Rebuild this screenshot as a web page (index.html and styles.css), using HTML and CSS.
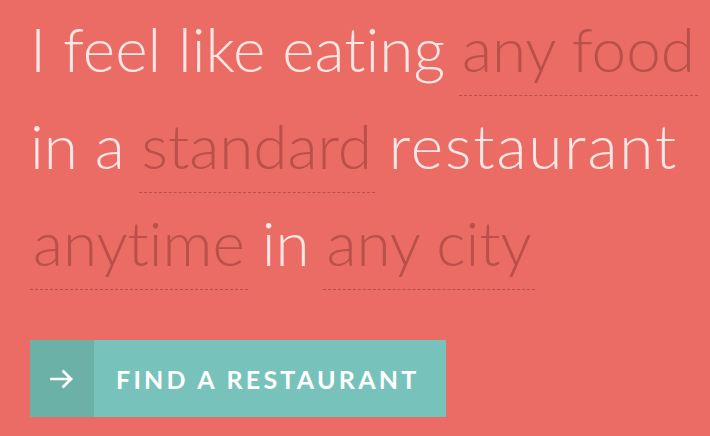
FILE: index.html
```html
<!DOCTYPE html>
<html>
<head>
<meta charset="utf-8">
<link rel="stylesheet" href="styles.css">
</head>
<body>
<main class="page">
  <p class="sentence">I feel like eating <span class="pick">any food</span><br>in a <span class="pick">standard</span> <span class="wide">restaurant</span><br><span class="pick first">anytime</span> in <span class="pick">any city</span></p>
  <button class="cta" type="button">
    <span class="cta-icon">
      <svg width="24" height="20" viewBox="0 0 24 20" aria-hidden="true"><path d="M1.5 10 H21 M13.5 2.5 L21 10 L13.5 17.5" fill="none" stroke="#fff" stroke-width="2.7" stroke-linecap="square"/></svg>
    </span>
    <span class="cta-label">FIND A RESTAURANT</span>
  </button>
</main>
</body>
</html>
```
FILE: styles.css
```css
html, body {
  margin: 0;
  padding: 0;
  background: #ea6c65;
}
.page {
  padding: 0 0 0 30px;
  font-family: Lato, "Open Sans", sans-serif;
}
.sentence {
  margin: 0;
  font-weight: 300;
  font-size: 62px;
  line-height: 97px;
  color: #fde6e3;
  white-space: nowrap;
  font-variant-ligatures: none;
}
.pick {
  color: #b9504a;
  padding: 0 3px 10px;
  margin: 0 -3px;
  border-bottom: 1px dashed #b9504a;
}
.pick.first {
  margin-left: 0;
}
.wide {
  letter-spacing: 1.9px;
}
.cta {
  margin-top: 49px;
  display: flex;
  align-items: stretch;
  height: 77px;
  padding: 0;
  border: 0;
  background: #77c3bc;
  font-family: Lato, sans-serif;
  cursor: pointer;
}
.cta-icon {
  width: 64px;
  background: #6bb1a8;
  display: flex;
  align-items: center;
  justify-content: center;
}
.cta-label {
  display: flex;
  align-items: center;
  padding: 0 26px 0 22px;
  color: #fff;
  font-weight: 700;
  font-size: 25px;
  letter-spacing: 3.25px;
}
```
